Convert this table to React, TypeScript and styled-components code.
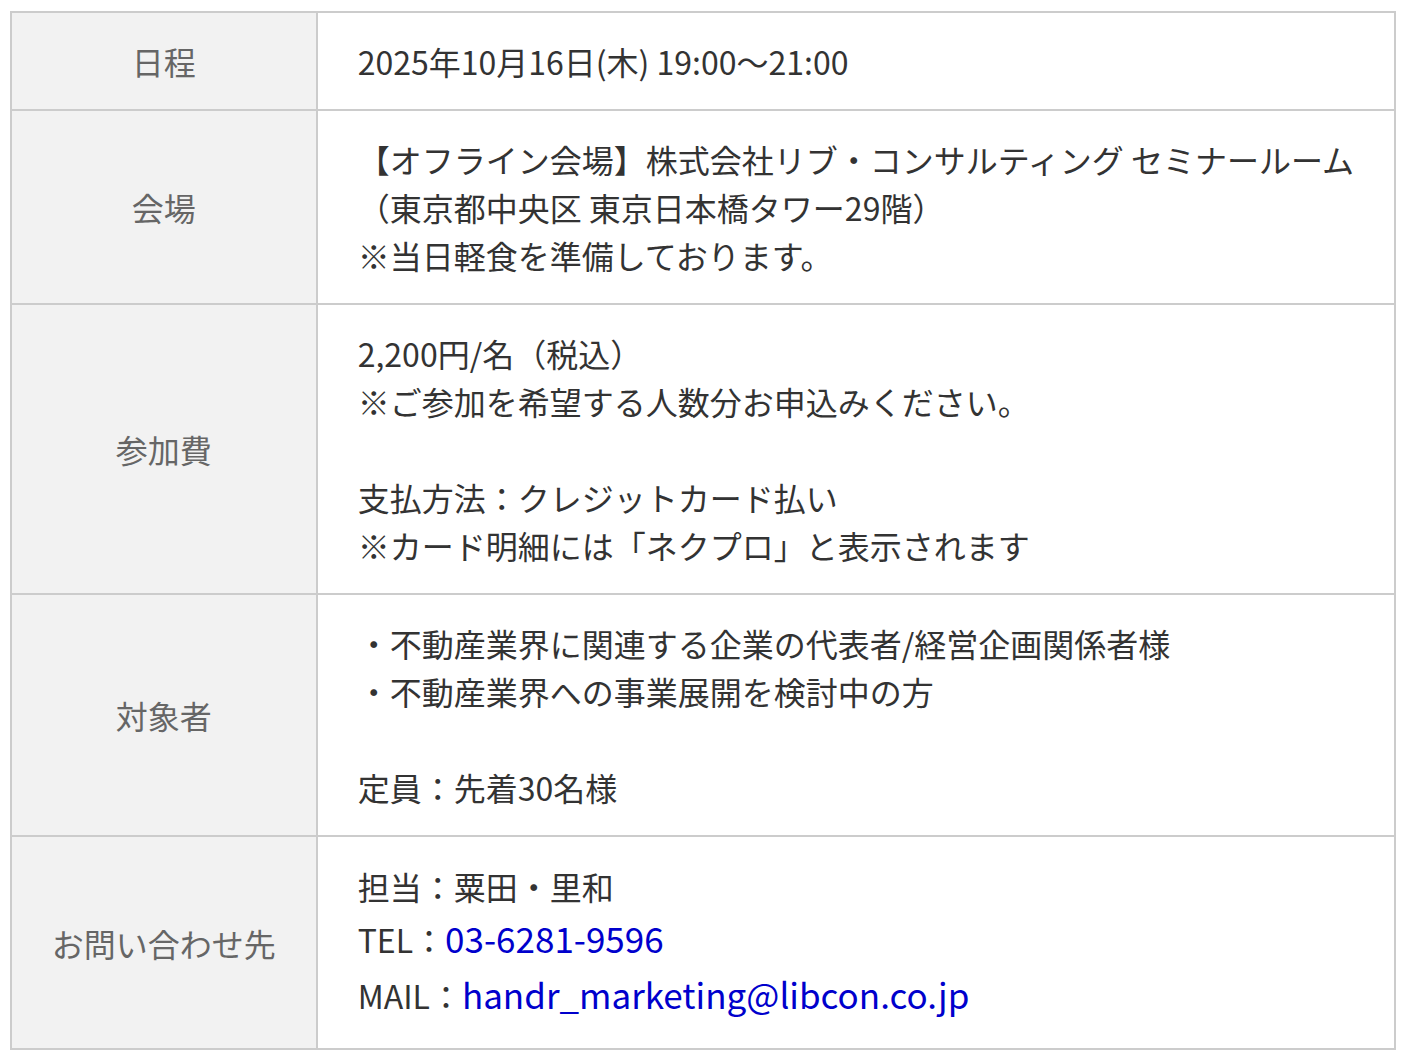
import React from "react";
import styled, { createGlobalStyle } from "styled-components";

const Global = createGlobalStyle`
  html, body { margin: 0; padding: 0; background: #fff; }
  body {
    font-family: "Noto Sans CJK JP", "Noto Sans", sans-serif;
    color: #333;
  }
`;

const Wrap = styled.div`
  padding: 11px 6px 0 10px;
`;

const Table = styled.table`
  width: 100%;
  border-collapse: collapse;
  border: 2px solid #ccc;
  font-size: 32px;
  line-height: 48px;
`;

const Row = styled.tr``;

const Label = styled.th`
  width: 304px;
  background: #f2f2f2;
  color: #666;
  font-weight: 400;
  text-align: center;
  vertical-align: middle;
  border: 2px solid #ccc;
  padding: 24px 0;
`;

const Cell = styled.td`
  border: 2px solid #ccc;
  padding: 24px 40px;
  vertical-align: middle;
  color: #333;
  text-align: left;
`;

const Line = styled.div<{ $h?: number }>`
  min-height: 48px;
  ${(p) => (p.$h ? `height: ${p.$h}px; line-height: ${p.$h}px;` : "")}
  white-space: nowrap;
`;

const Link = styled.a`
  color: #0000cc;
  text-decoration: none;
  font-size: 35px;
`;

const rows: { label: string; lines: string[] }[] = [
  { label: "日程", lines: ["2025年10月16日(木) 19:00〜21:00"] },
  {
    label: "会場",
    lines: [
      "【オフライン会場】株式会社リブ・コンサルティング セミナールーム",
      "（東京都中央区 東京日本橋タワー29階）",
      "※当日軽食を準備しております。",
    ],
  },
  {
    label: "参加費",
    lines: [
      "2,200円/名（税込）",
      "※ご参加を希望する人数分お申込みください。",
      "",
      "支払方法：クレジットカード払い",
      "※カード明細には「ネクプロ」と表示されます",
    ],
  },
  {
    label: "対象者",
    lines: [
      "・不動産業界に関連する企業の代表者/経営企画関係者様",
      "・不動産業界への事業展開を検討中の方",
      "",
      "定員：先着30名様",
    ],
  },
];

export default function App() {
  return (
    <>
      <Global />
      <Wrap>
        <Table>
          <tbody>
            {rows.map((r) => (
              <Row key={r.label}>
                <Label>{r.label}</Label>
                <Cell>
                  {r.lines.map((l, i) => (
                    <Line key={i}>{l}</Line>
                  ))}
                </Cell>
              </Row>
            ))}
            <Row>
              <Label>お問い合わせ先</Label>
              <Cell>
                <Line $h={50}>担当：粟田・里和</Line>
                <Line $h={53}>
                  TEL：<Link href="#">03-6281-9596</Link>
                </Line>
                <Line $h={60}>
                  MAIL：<Link href="#">handr_marketing@libcon.co.jp</Link>
                </Line>
              </Cell>
            </Row>
          </tbody>
        </Table>
      </Wrap>
    </>
  );
}
